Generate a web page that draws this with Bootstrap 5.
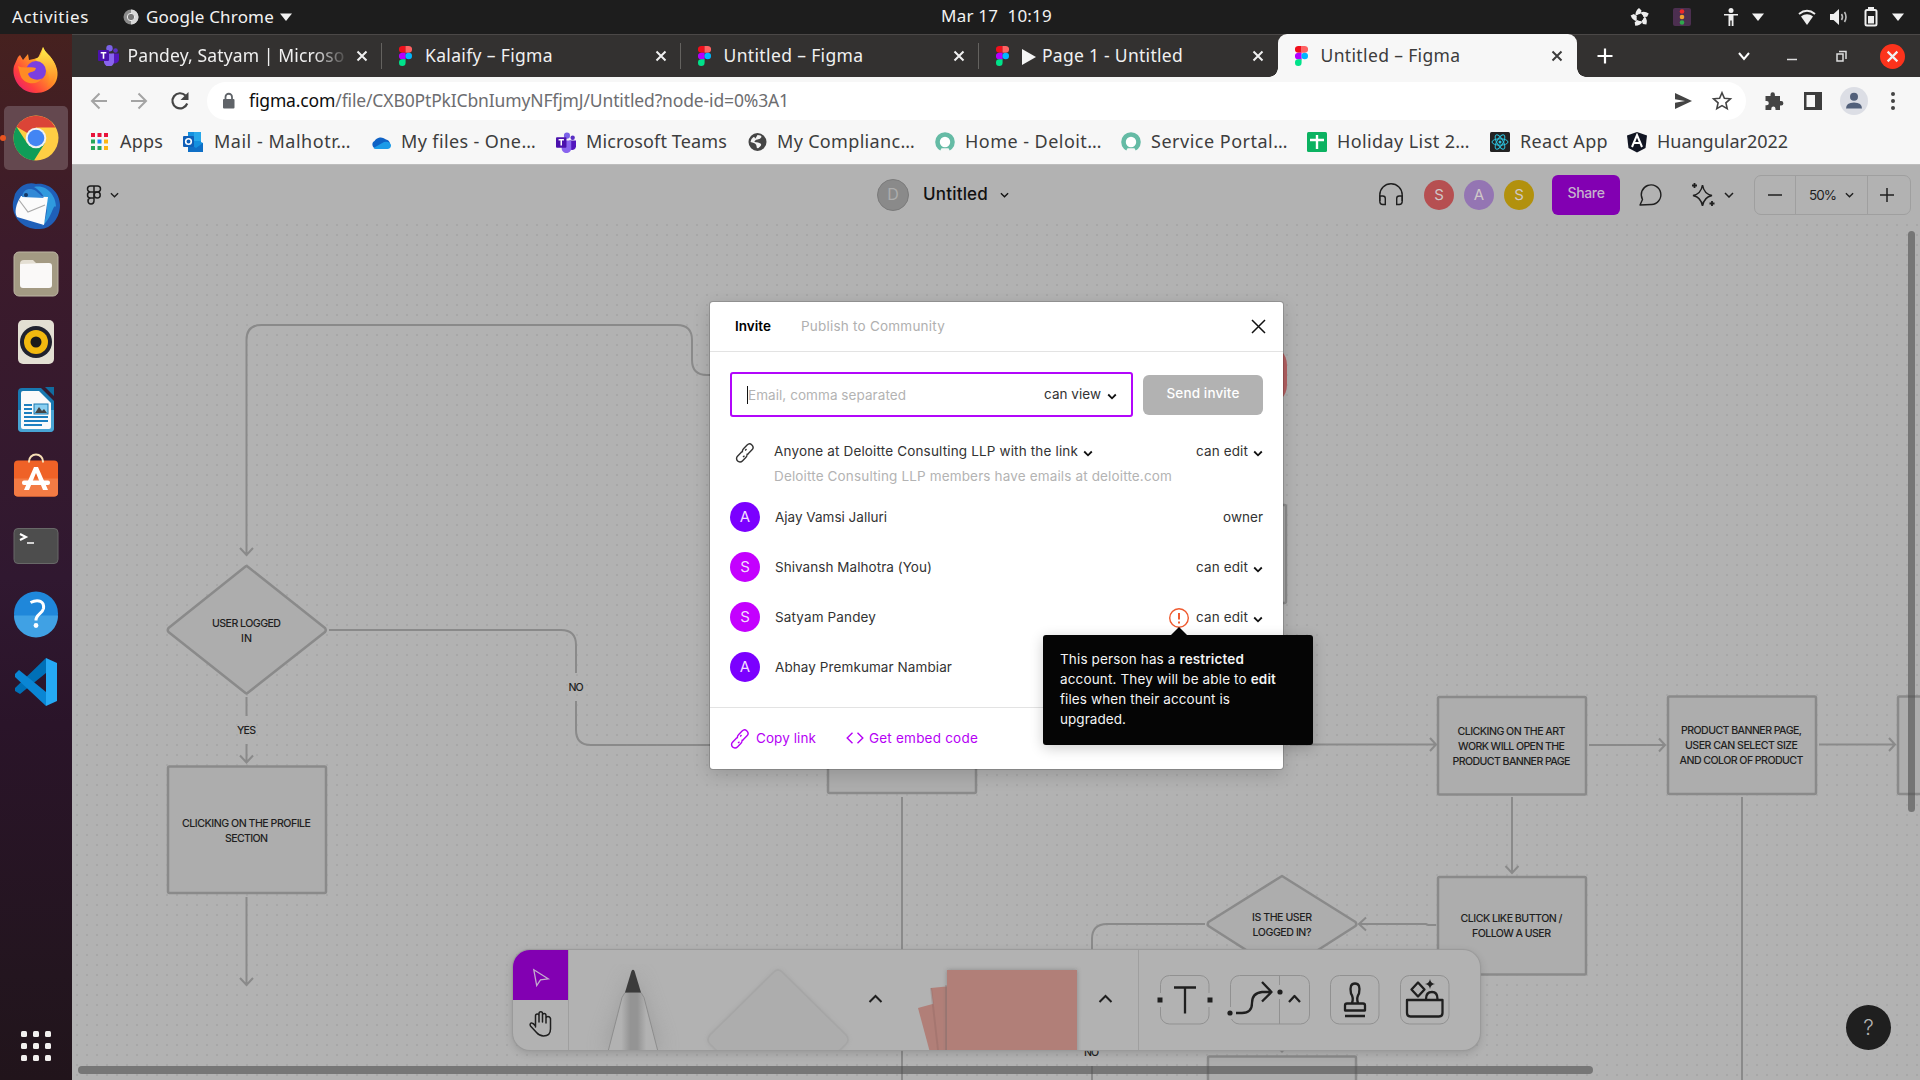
<!DOCTYPE html>
<html lang="en">
<head>
<meta charset="utf-8">
<meta name="viewport" content="width=device-width, initial-scale=1">
<title>Untitled – Figma</title>
<link href="https://cdn.jsdelivr.net/npm/bootstrap@5.3.0/dist/css/bootstrap.min.css" rel="stylesheet">
<style>
html,body{height:100%}
body{margin:0;overflow:hidden;font-family:"Noto Sans","Open Sans",sans-serif;font-size:17px;line-height:1.2;background:#1d1d1d}
svg{display:block;flex:none;overflow:visible}
span{white-space:nowrap}
.desk-bar{height:34px;background:#1d1d1d;color:#f2f2f2;position:relative;flex:none;padding:0 10px 0 12px}
.desk-clock{position:absolute;left:941px;top:6px;white-space:pre}
.s3{margin-left:3px}.s8{margin-left:8px}.s18{margin-left:18px}.s25{margin-left:25px}
.dock{width:72px;flex:none;background:linear-gradient(#46211f 0,#3c1b2b 20%,#301830 52%,#2a1429 66%,#23151f 90%,#21141b 100%);padding:4px 0 19px}
.dock-app{width:64px;height:64px;border-radius:5px;position:relative}
.dock-app.on{background:#64484f}
.dock-app.on::before{content:"";position:absolute;left:-4px;top:29px;width:6px;height:6px;border-radius:50%;background:#e95420}
.tabs{height:43px;background:#333130;border-top:1px solid #4b4847;color:#f0f0f0;padding-left:11.5px;flex:none;font-size:17.5px}
.tab{width:298.5px;height:42px;position:relative;padding-bottom:1px}
.tab .fav{width:26px;margin-left:17px;flex:none}
.tab .fav.wide{width:30px;margin-left:14px}
.tab .shut{margin-left:auto;margin-right:14px}
.tab.line::after{content:"";position:absolute;right:0;top:8px;height:26px;width:1px;background:#64625f}
.tab.on{background:#f7f7f7;color:#3c3c3c;border-radius:9px 9px 0 0;height:43px;margin-top:-1px;padding-bottom:0;width:299px}
.tab.on::before,.tab.on::after{content:"";position:absolute;bottom:0;width:9px;height:9px}
.tab.on::before{left:-9px;background:radial-gradient(circle at 0 0,transparent 8.5px,#f7f7f7 9px)}
.tab.on::after{right:-9px;background:radial-gradient(circle at 100% 0,transparent 8.5px,#f7f7f7 9px)}
.fade-end{-webkit-mask-image:linear-gradient(90deg,#000 185px,transparent 222px);mask-image:linear-gradient(90deg,#000 185px,transparent 222px)}
.chrome-close{width:25px;height:25px;border-radius:50%;background:#fc331c}
.tools{height:46px;background:#f7f7f7;flex:none;padding-left:17px;padding-top:1px;color:#3f3f3f}
.omni{width:1539px;height:38px;border-radius:19px;background:#fff;color:#6d6d70;padding-left:15px;padding-right:14px;margin-left:17px;font-size:17.5px}
.omni b{font-weight:400;color:#0c0c0c}
.marks{height:42px;background:#f7f7f7;border-bottom:1px solid #bdbdbd;flex:none;color:#3d3d3d;padding-left:18px;padding-bottom:3px;font-size:18px}
.bm{flex:none}
.bm svg{margin-right:10px}
.app{background:#b2b2b2;font-family:Inter,"Liberation Sans",sans-serif;color:#1f1f1f}
.app-head{height:57px;position:absolute;left:0;right:0;top:0;padding:10px 9px 7px 14px;background:#b2b2b2}
.who{width:30px;height:30px;border-radius:50%;color:#d0c8c8;font-size:15px;margin-right:10px}
.share{width:68px;height:40px;border-radius:6px;background:#8200b2;color:#c5b3cc;font-size:14px;font-weight:500;padding-bottom:4px;margin-left:8px}
.zoomer{width:157px;height:40px;border:1px solid #9f9f9f;border-radius:7px;font-size:13.5px}
.zoomer>div{height:38px}
.zoomer .mid{width:73px;border:solid #9f9f9f;border-width:0 1px}
.doc{position:absolute;left:805px;top:13px;font-size:17px;color:#111;font-weight:450}
.doc i{width:32px;height:32px;border-radius:50%;background:#8a8a8a;border:1px solid #7b7b7b;color:#adadad;font-size:16px;font-style:normal;font-weight:400;position:relative;top:1px}
.flow{position:absolute;left:0;top:0}
.flow text{font-size:10.6px;fill:#1f1f1f;font-weight:450;text-anchor:middle}
.kit{position:absolute;left:441px;top:785px;width:967px;height:100px;border-radius:17px;background:#b2b2b2;box-shadow:0 0 1px 1px #999,0 3px 10px rgba(0,0,0,.16);overflow:hidden}
.kit-l{width:56px;border-right:1px solid #9f9f9f;flex:none}
.kit-l div{height:50px}
.kit-l .pick{background:#8200b2;width:55px}
.modal-box{position:absolute;left:638px;top:137px;width:573px;height:467px;border-radius:3px;background:#fff;font-size:13.5px;color:#333;box-shadow:0 0 0 1px rgba(0,0,0,.15),0 5px 18px rgba(0,0,0,.16)}
.m-head{height:50px;border-bottom:1px solid #e3e3e3;padding:0 17px 1px 25px}
.mail{width:403px;height:45px;border:2px solid #b206fb;border-radius:3px;padding:0 14px 0 15px}
.mail em{font-style:normal;color:#b3b3b3;border-left:1px solid #111;line-height:18px}
.send{width:120px;height:40px;border-radius:6px;background:#b2b2b2;color:#fff;font-weight:500;padding-bottom:3px}
.m-row{height:50px;padding:0 20px}
.face{width:30px;height:30px;border-radius:50%;background:#c400ff;color:#f3dcff;font-size:15px;margin-right:15px}
.face.v{background:#7b00ff}
.m-foot{height:61px;border-top:1px solid #e3e3e3;color:#b500f5;padding:0 20px;margin-top:15px}
.tip{position:absolute;left:971px;top:470px;width:270px;height:110px;border-radius:3px;background:#050505;color:#f4f4f4;font-size:13.5px;line-height:20px;padding:14px 17px;box-shadow:0 3px 14px rgba(0,0,0,.2)}
.tip::before{content:"";position:absolute;left:128px;top:-8px;border:8px solid transparent;border-top:0;border-bottom-color:#050505}
.tip b{font-weight:600}
.bar-v{position:absolute;left:1836px;top:66px;width:7px;height:581px;border-radius:4px;background:rgba(80,80,80,.62)}
.bar-h{position:absolute;left:6px;top:901px;width:1515px;height:8px;border-radius:4px;background:rgba(80,80,80,.62)}
.ask{position:absolute;left:1774px;top:840px;width:45px;height:45px;border-radius:50%;background:#1f1f1f;color:#b2b2b2;font-size:21px;font-weight:300}
</style>
</head>
<body class="d-flex flex-column">
<svg width="0" height="0" class="position-absolute">
<defs>
<symbol id="fig" viewBox="0 0 13 20"><path d="M3.3 0h3.3v6.700H3.300a3.300 3.300 0 010-6.700z" fill="#f00f1b"/><path d="M6.500 0h3.200a3.300 3.300 0 010 6.700H6.500z" fill="#ff6262"/><path d="M3.300 6.700h3.300v6.700H3.300a3.300 3.300 0 010-6.700z" fill="#b300ff"/><circle cx="9.700" cy="10" r="3.300" fill="#00b6ff"/><path d="M3.300 13.300h3.300v3.400a3.300 3.300 0 11-3.300-3.400z" fill="#00e28a"/></symbol>
<symbol id="x" viewBox="0 0 12 12"><path d="M1.500 1.500l9 9m0-9l-9 9" stroke="currentColor" stroke-width="2" fill="none"/></symbol>
<symbol id="teams" viewBox="0 0 21 21"><circle cx="17.500" cy="5.500" r="2.300" fill="#5a2fc4"/><circle cx="11.500" cy="3.300" r="3.200" fill="#7b62e8"/><path d="M14 8.500h7v6a4 4 0 01-5 3.800z" fill="#5316bd"/><path d="M6 8.500h10v7a5 5 0 01-10 2z" fill="#8964ee"/><rect y="5" width="11" height="11" rx="1" fill="#4b11ad"/><path d="M2.700 7.700h5.600M5.500 7.700v6" stroke="#fff" stroke-width="1.600"/></symbol>
<symbol id="cv" viewBox="0 0 10 6"><path d="M1 1l4 4 4-4" fill="none" stroke="currentColor" stroke-width="1.500"/></symbol>
<symbol id="cvb" viewBox="0 0 10 7"><path d="M1.200 1.500L5 5.300l3.800-3.800" fill="none" stroke="#111" stroke-width="1.800"/></symbol>
<symbol id="tri" viewBox="0 0 24 24"><path d="M6 8.500h12L12 16z" fill="currentColor"/></symbol>
<symbol id="link" viewBox="0 0 20 20"><path d="M7.500 9.300q-.5-2 1-3.500l3.600-3.700a3.300 3.300 0 014.900 4.700l-3.600 3.800q-.8.700-1.700.9M12 10.700q.5 2-1 3.500l-3.600 3.700a3.300 3.300 0 01-4.900-4.700L6.100 9.400q.8-.7 1.700-.9M11.500 6l-1.300 1.400M9.500 12.700L8 14" fill="none" stroke="currentColor" stroke-width="1.400"/></symbol>
<symbol id="del" viewBox="0 0 20 20"><circle cx="10" cy="10" r="7.500" fill="#fff" stroke="#65bba5" stroke-width="4.600"/><path d="M6.500 16.300h7L16 21H4z" fill="#f7f7f7"/></symbol>
</defs></svg>

<header class="desk-bar d-flex align-items-center">
<span class="fit" data-w="77">Activities</span>
<svg width="16" height="16" viewBox="0 0 16 16" style="margin:0 7px 0 34px"><circle cx="8" cy="8" r="7.500" fill="#8b8b8b"/><path d="M8 .5a7.500 7.500 0 010 15z" fill="#d8d8d8"/><circle cx="8" cy="8" r="3.700" fill="#777" stroke="#eee"/></svg>
<span class="fit" data-w="128">Google Chrome</span>
<svg width="24" height="24"><use href="#tri"/></svg>
<span class="desk-clock fit" data-w="111">Mar 17  10:19</span>
<div class="d-flex align-items-center ms-auto">
<svg width="24" height="24" viewBox="0 0 24 24"><g fill="#eee"><path id="bl0" d="M11 3l2.500 2.500-1 3.500-5 1.500Q7 6 11 3z"/><use href="#bl0" transform="rotate(72 12 12.500)"/><use href="#bl0" transform="rotate(144 12 12.500)"/><use href="#bl0" transform="rotate(216 12 12.500)"/><use href="#bl0" transform="rotate(288 12 12.500)"/></g><circle cx="12" cy="12.500" r="3.200" fill="#1d1d1d"/></svg>
<svg class="s18" width="24" height="24" viewBox="0 0 24 24"><rect x="3" y="3" width="18" height="18" rx="2" fill="#4c2f50"/><circle cx="12" cy="6.500" r="2.300" fill="#ef2929"/><circle cx="12" cy="12" r="2.300" fill="#f0a030"/><circle cx="12" cy="17.500" r="2.300" fill="#2fa84c"/></svg>
<svg class="s25" width="24" height="24" viewBox="0 0 24 24" fill="#eee"><circle cx="12" cy="5.500" r="2.500"/><path d="M5 9h14v1.600h-4.500V21h-1.800v-5.500h-1.400V21H9.500V10.600H5z"/></svg>
<svg class="s3" width="24" height="24"><use href="#tri"/></svg>
<svg class="s25" width="24" height="24" viewBox="0 0 24 24" fill="none" stroke="#eee" stroke-width="2"><path d="M4 9c5-4 11-4 16 0"/><path d="M6 11.500c4-3 8-3 12 0L12 20z" fill="#eee" stroke="none"/></svg>
<svg class="s8" width="24" height="24" viewBox="0 0 24 24"><path d="M3 9h3.500L12 4v16l-5.500-5H3z" fill="#eee"/><path d="M14.500 9q2 3 0 6M17.500 7q3 5 0 10" fill="none" stroke="#bbb" stroke-width="1.600"/></svg>
<svg class="s8" width="24" height="24" viewBox="0 0 24 24" fill="#eee"><rect x="6.500" y="5" width="11" height="15.500" rx="1.500" fill="none" stroke="#eee" stroke-width="2"/><rect x="9" y="2" width="6" height="3"/><rect x="9" y="11" width="6" height="7.500"/></svg>
<svg class="s3" width="24" height="24"><use href="#tri"/></svg>
</div>
</header>

<div class="d-flex flex-grow-1">
<nav class="dock d-flex flex-column align-items-center gap-1">
<div class="dock-app d-flex align-items-center justify-content-center"><svg width="46" height="46" viewBox="0 0 46 46"><defs><linearGradient id="ff" x1="1" y1="0" x2="0" y2="1"><stop offset="0" stop-color="#ffe84a"/><stop offset=".4" stop-color="#ff9a25"/><stop offset=".72" stop-color="#ff3f3d"/><stop offset="1" stop-color="#e01085"/></linearGradient><linearGradient id="fy" x1="0" y1="0" x2="0" y2="1"><stop offset="0" stop-color="#fff14b"/><stop offset="1" stop-color="#ff7b22"/></linearGradient></defs><path d="M5 10l2-2 3 5 5-6 1 6 9-2 5-11c2 6 8 8 12 17 8 16-4 29-19 29C7 46-2 31 1 19z" fill="url(#ff)"/><path d="M30 0c2 6 8 8 12 17 4 10-1 20-8 23 4-8 2-17-4-20l-8-8c5-2 7-5 8-12z" fill="url(#fy)"/><circle cx="23" cy="24" r="10" fill="#7b3fe0"/><path d="M5 19c6 3 13 0 18 2-1 5-6 3-8 6 2 6 11 7 14 4-5 9-20 6-22-4z" fill="#ff8b24"/></svg></div>
<div class="dock-app on d-flex align-items-center justify-content-center"><svg width="46" height="46" viewBox="0 0 46 46"><circle cx="23" cy="23" r="22.500" fill="#ffce44"/><path d="M23 23L3.500 11.800A22.500 22.500 0 0142.500 12.500H23z" fill="#db4437"/><path d="M3.500 11.800A22.500 22.500 0 0021 45.400L32 28 23 33 14 28z" fill="#0f9d58"/><circle cx="23" cy="23" r="10.300" fill="#f1f1f1"/><circle cx="23" cy="23" r="8.300" fill="#4285f4"/></svg></div>
<div class="dock-app d-flex align-items-center justify-content-center"><svg width="48" height="48" viewBox="0 0 48 48"><path d="M3 12C9 1 19 0 24 2c12-2 24 8 24 21 0 12-8 24-20 24C12 48-1 36 1 20z" fill="#1f5fb8"/><path d="M22 5c13-3 22 9 22 20-3-4-4 12-14 19 8-14 7-30-8-39z" fill="#2f9ade"/><path d="M9 14l27 1-4 28L5 35C2 30 4 22 9 14z" fill="#fbfbfb"/><path d="M7 18l9 12 17-7" fill="none" stroke="#aaa" stroke-width="1.200"/><path d="M10 15C11 7 18 5 24 9l8 7z" fill="#3289d6"/><circle cx="14" cy="13" r="2" fill="#153764"/></svg></div>
<div class="dock-app d-flex align-items-center justify-content-center"><svg width="46" height="46" viewBox="0 0 46 46"><rect x="1" y="1" width="44" height="44" rx="5" fill="#a39a83" stroke="#bdb6a4"/><path d="M7 13q0-4 4-4h9l3 3h13v10H7z" fill="#e4dfd3"/><path d="M7 14q0-1 1-1l28-1q3 0 3 3v19q0 3-3 3H10q-3 0-3-3z" fill="#faf9f8"/></svg></div>
<div class="dock-app d-flex align-items-center justify-content-center"><svg width="46" height="46" viewBox="0 0 46 46"><rect x="5" y="1" width="36" height="44" rx="5" fill="#e3dfd3"/><circle cx="23" cy="23" r="16" fill="#20222e"/><circle cx="23" cy="23" r="12" fill="#f2b90f"/><circle cx="23" cy="23" r="5.500" fill="#1a1a1a"/></svg></div>
<div class="dock-app d-flex align-items-center justify-content-center"><svg width="46" height="46" viewBox="0 0 46 46"><path d="M9 1h19l13 13v27q0 4-4 4H9q-4 0-4-4V5q0-4 4-4z" fill="#1878b0"/><path d="M5 23h36v18q0 4-4 4H9q-4 0-4-4z" fill="#48a4d4"/><path d="M32 0h9v9z" fill="#116c9f"/><path d="M10 4h16l12 12v24q0 2-2 2H10q-2 0-2-2V6q0-2 2-2z" fill="#fafafa"/><path d="M11 18h8m-8 4h8m-8 4h8m-8 4h24m-24 4h24m-24 4h18" stroke="#1c7fc0" stroke-width="2"/><rect x="21" y="17" width="14" height="10" fill="#8ad0f2" stroke="#1878b0"/><path d="M22 26l4-6 3 4 2-2 3 4z" fill="#444"/></svg></div>
<div class="dock-app d-flex align-items-center justify-content-center"><svg width="46" height="46" viewBox="0 2.500 46 46"><rect x="1" y="8" width="44" height="36" rx="4" fill="#ef6227"/><path d="M1 26h44v14q0 4-4 4H5q-4 0-4-4z" fill="#f37b44"/><path d="M16 10V9a7 7 0 0114 0v1" fill="none" stroke="#f6deb5" stroke-width="2"/><path d="M21 14.500h4l10 23h-5l-7-17-7 17h-5z" fill="#fff"/><rect x="9" y="28" width="28" height="4.500" rx="2" fill="#fff"/></svg></div>
<div class="dock-app d-flex align-items-center justify-content-center"><svg width="46" height="46" viewBox="0 0 46 46"><rect x="1" y="5.500" width="44" height="35" rx="4" fill="#4d4d4d" stroke="#686868"/><path d="M7 11l6 3-6 3" fill="none" stroke="#fff" stroke-width="2"/><path d="M14 20h7" stroke="#fff" stroke-width="1.500"/></svg></div>
<div class="dock-app d-flex align-items-center justify-content-center"><svg width="46" height="46" viewBox="0 .5 46 46"><circle cx="23" cy="23" r="22" fill="#1f87da"/><path d="M1 25a22 22 0 0044 0z" fill="#40a1e4"/><path d="M17.500 12c8-4 14-1 13 6-1 5-8 6-7.500 12" fill="none" stroke="#fff" stroke-width="3"/><circle cx="23" cy="35" r="2.400" fill="#fff"/></svg></div>
<div class="dock-app d-flex align-items-center justify-content-center"><svg width="44" height="50" viewBox="0 0 44 50"><path d="M1 31l31-30v15L6 37 1 34z" fill="#0070b7"/><path d="M1 17l4-4 27 22v14L1 20z" fill="#0a86d4"/><path d="M32 1l11 5v38l-11 5z" fill="#25a9f4"/></svg></div>
<svg class="mt-auto" width="30" height="30" viewBox="0 0 30 30" fill="#f2f0ef"><rect width="6" height="6" rx="1.500"/><rect x="12" width="6" height="6" rx="1.500"/><rect x="24" width="6" height="6" rx="1.500"/><rect y="12" width="6" height="6" rx="1.500"/><rect x="12" y="12" width="6" height="6" rx="1.500"/><rect x="24" y="12" width="6" height="6" rx="1.500"/><rect y="24" width="6" height="6" rx="1.500"/><rect x="12" y="24" width="6" height="6" rx="1.500"/><rect x="24" y="24" width="6" height="6" rx="1.500"/></svg>
</nav>

<main class="d-flex flex-column flex-grow-1" style="min-width:0">
<div class="tabs d-flex">
<div class="tab line d-flex align-items-center"><div class="fav wide"><svg width="21" height="21"><use href="#teams"/></svg></div><div class="fade-end"><span class="fit" data-w="217">Pandey, Satyam | Microso</span></div><svg class="shut" width="12" height="12"><use href="#x"/></svg></div>
<div class="tab line d-flex align-items-center"><div class="fav"><svg width="13" height="20"><use href="#fig"/></svg></div><span class="fit" data-w="128">Kalaify – Figma</span><svg class="shut" width="12" height="12"><use href="#x"/></svg></div>
<div class="tab line d-flex align-items-center"><div class="fav"><svg width="13" height="20"><use href="#fig"/></svg></div><span class="fit" data-w="140">Untitled – Figma</span><svg class="shut" width="12" height="12"><use href="#x"/></svg></div>
<div class="tab d-flex align-items-center"><div class="fav"><svg width="13" height="20"><use href="#fig"/></svg></div><svg width="15" height="18" viewBox="0 0 15 18"><path d="M0 2l14 8-14 8z" fill="#f4f4f4"/></svg><span class="fit" data-w="141" style="margin-left:5px">Page 1 - Untitled</span><svg class="shut" width="12" height="12"><use href="#x"/></svg></div>
<div class="tab on d-flex align-items-center"><div class="fav"><svg width="13" height="20"><use href="#fig"/></svg></div><span class="fit" data-w="140">Untitled – Figma</span><svg class="shut" width="12" height="12"><use href="#x"/></svg></div>
<div class="d-flex align-items-center flex-grow-1" style="padding:0 15px 0 20px">
<svg width="16" height="16" viewBox="0 0 16 16"><path d="M8 .5v15M.5 8h15" stroke="#fff" stroke-width="2.200"/></svg>
<svg class="ms-auto" width="12" height="12" viewBox="0 0 12 12"><path d="M1 3l5 6 5-6" fill="none" stroke="#fff" stroke-width="2"/></svg>
<svg width="10" height="10" viewBox="0 0 10 10" style="margin-left:37px"><path d="M0 8.500h10" stroke="#ddd" stroke-width="1.500"/></svg>
<svg width="11" height="12" viewBox="0 0 11 12" style="margin-left:39px"><path d="M1 4h6v7H1zM3 1.500h7V9" fill="none" stroke="#ddd" stroke-width="1.500"/></svg>
<div class="chrome-close d-flex align-items-center justify-content-center" style="margin-left:33px"><svg width="13" height="13"><use href="#x"/></svg></div>
</div>
</div>

<div class="tools d-flex align-items-center">
<svg width="20" height="20" viewBox="0 0 20 20" fill="none" stroke="#a4a4a4" stroke-width="2"><path d="M18 10H3m7.500-7.500L3 10l7.500 7.500"/></svg>
<svg width="20" height="20" viewBox="0 0 20 20" fill="none" stroke="#a4a4a4" stroke-width="2" style="margin-left:20px"><path d="M2 10h15M9.500 2.500L17 10l-7.500 7.500"/></svg>
<svg width="20" height="20" viewBox="0 0 20 20" style="margin-left:21px"><path d="M15.500 4.500a7.600 7.600 0 101.700 8" fill="none" stroke="#444" stroke-width="2.200"/><path d="M18.500 1v8h-8z" fill="#444"/></svg>
<div class="omni d-flex align-items-center">
<svg width="14" height="16" viewBox="0 0 14 16"><rect x="1" y="6" width="11.500" height="9.500" rx="1" fill="#5f6368"/><path d="M3.500 7V4a3.200 3.200 0 016.500 0v3" fill="none" stroke="#5f6368" stroke-width="1.800"/></svg>
<span class="fit" data-w="540" style="margin-left:13px"><b>figma.com</b>/file/CXB0PtPkICbnIumyNFfjmJ/Untitled?node-id=0%3A1</span>
<svg class="ms-auto" width="18" height="16" viewBox="0 0 18 16"><path d="M1 0l17 8-17 8V9.700L11 8 1 6.300z" fill="#444"/></svg>
<svg width="20" height="20" viewBox="0 0 20 20" style="margin-left:20px"><path d="M10 1.800l2.400 5.500 6 .5-4.500 4 1.300 5.900-5.200-3.100-5.200 3.100 1.300-5.900-4.500-4 6-.5z" fill="none" stroke="#444" stroke-width="1.600"/></svg>
</div>
<svg width="20" height="20" viewBox="0 0 20 20" style="margin-left:18px"><path d="M1.500 5h5V3.500a2.200 2.200 0 014.400 0V5H16v5h1.200a2.200 2.200 0 010 4.400H16V19h-4.500v-1.300a2.100 2.100 0 00-4.200 0V19H1.500v-4.700h1.200a2.100 2.100 0 000-4.200H1.500z" fill="#444"/></svg>
<svg width="18" height="18" viewBox="0 0 18 18" style="margin-left:20px"><path d="M0 0h18v18H0zM2.500 3v12H11V3z" fill="#3d3d3d" fill-rule="evenodd"/></svg>
<svg width="28" height="28" viewBox="0 0 28 28" style="margin-left:18px"><circle cx="14" cy="14" r="14" fill="#dcdee5"/><circle cx="14" cy="9.800" r="4" fill="#52607a"/><path d="M6 21.500q0-6 8-6t8 6z" fill="#52607a"/></svg>
<svg width="4" height="18" viewBox="0 0 4 18" style="margin-left:23px" fill="#444"><circle cx="2" cy="2" r="2"/><circle cx="2" cy="9" r="2"/><circle cx="2" cy="16" r="2"/></svg>
</div>

<div class="marks d-flex align-items-center">
<div class="bm d-flex align-items-center" style="width:92px"><svg width="20" height="18" viewBox="-1 0 20 18"><path d="M0 0h4v4H0zM6.500 0h4v4h-4zM13 0h4v4h-4z" fill="#e8143c"/><path d="M0 6.500h4v4H0zM0 13h4v4H0zM6.500 13h4v4h-4z" fill="#27a65b"/><path d="M6.500 6.500h4v4h-4z" fill="#1e88ff"/><path d="M13 6.500h4v4h-4zM13 13h4v4h-4z" fill="#fdb515"/></svg><span class="fit" data-w="43">Apps</span></div>
<div class="bm d-flex align-items-center" style="width:189px"><svg width="22" height="20" viewBox="-1 0 22 20"><path d="M5 0h13v10l2 1v8H5z" fill="#1490df"/><path d="M11 0h7v9h-7z" fill="#28a8ea"/><path d="M5 11l8 5 7-5v9H5z" fill="#0f6fc6"/><rect y="4" width="11" height="11" rx="1" fill="#0f5fb8"/><circle cx="5.500" cy="9.500" r="2.800" fill="none" stroke="#fff" stroke-width="1.600"/></svg><span class="fit" data-w="137">Mail - Malhotr…</span></div>
<div class="bm d-flex align-items-center" style="width:185px"><svg width="20" height="14" viewBox="0 0 20 14"><path d="M3.500 6A7 6 0 0115 4.500a5 5 0 012 9H5A4 4 0 013.500 6z" fill="#0f62c5"/><path d="M5 14a4 4 0 01-2.500-1L13 7a5 4 0 017 4q-.5 3-4 3z" fill="#1c9be8"/></svg><span class="fit" data-w="135">My files - One…</span></div>
<div class="bm d-flex align-items-center" style="width:192px"><svg width="20" height="21"><use href="#teams"/></svg><span class="fit" data-w="141">Microsoft Teams</span></div>
<div class="bm d-flex align-items-center" style="width:187px"><svg width="19" height="18" viewBox="0 0 18 18"><circle cx="9" cy="9" r="9" fill="#454545"/><path d="M9 2q4 0 4 2-1 2-4 2.500T6 9q4 0 6 1.500T10 15q-2 1-2-2t-6-4q0-3 3-5 2 0 1.500 1.500T9 2z" fill="#f4f4f4"/></svg><span class="fit" data-w="138">My Complianc…</span></div>
<div class="bm d-flex align-items-center" style="width:186px"><svg width="20" height="20"><use href="#del"/></svg><span class="fit" data-w="137">Home - Deloit…</span></div>
<div class="bm d-flex align-items-center" style="width:186px"><svg width="20" height="20"><use href="#del"/></svg><span class="fit" data-w="137">Service Portal…</span></div>
<div class="bm d-flex align-items-center" style="width:183px"><svg width="20" height="20" viewBox="0 0 20 20"><rect width="20" height="20" rx="1.500" fill="#0bb261"/><path d="M10 3v14M3 8h14" stroke="#fff" stroke-width="2.400"/></svg><span class="fit" data-w="133">Holiday List 2…</span></div>
<div class="bm d-flex align-items-center" style="width:137px"><svg width="20" height="20" viewBox="0 0 20 20"><rect width="20" height="20" rx="1.500" fill="#222"/><g fill="none" stroke="#2cc5e0"><ellipse cx="10" cy="10" rx="8" ry="3.200"/><ellipse cx="10" cy="10" rx="8" ry="3.200" transform="rotate(60 10 10)"/><ellipse cx="10" cy="10" rx="8" ry="3.200" transform="rotate(120 10 10)"/></g><circle cx="10" cy="10" r="1.500" fill="#2cc5e0"/></svg><span class="fit" data-w="88">React App</span></div>
<div class="bm d-flex align-items-center"><svg width="20" height="20" viewBox="0 0 20 20"><path d="M10 0l10 3.500L18.500 16 10 20.500 1.500 16 0 3.500z" fill="#111522"/><path d="M5 15l5-12 5 12m-8-4h6" fill="none" stroke="#fff" stroke-width="2"/></svg><span class="fit" data-w="131">Huangular2022</span></div>
</div>

<section class="app flex-grow-1 position-relative overflow-hidden">
<svg class="flow" width="1848" height="915" viewBox="72 165 1848 915">
<defs><pattern id="dots" x="76" y="224" width="10" height="10" patternUnits="userSpaceOnUse"><rect width="2" height="2" fill="#a7a7a7"/></pattern></defs>
<rect x="72" y="222" width="1848" height="858" fill="url(#dots)"/>
<g fill="none" stroke="#8a8a8a" stroke-width="2">
<path d="M246.500 555V340q0-15 15-15H677q15 0 15 15v20q0 15 15 15h10M240 548l6.500 7 6.500-7"/>
<path d="M329 630H561q15 0 15 15v28M576 701v29q0 15 15 15h125M1290 744.500h146M1430 738l6 6.500-6 6.500"/>
<path d="M246.500 697v19M246.500 744v18M240 755.500l6.500 7 6.500-7M246.500 897v87M240 978l6.500 7 6.500-7"/>
<path d="M1589 745h76M1659 738.500l6 6.500-6 6.500M1819 744.500h76M1889 738l6 6.500-6 6.500"/>
<path d="M1512 797v76M1505.500 866l6.500 7 6.500-7M1742 797v283M902 797v283"/>
<path d="M1436 925h-8l-2-1h-66M1366 917.500l-7 6.500 7 6.500M1205 924h-98q-15 0-15 15v100M1092 1066v14M1282 1040v11"/>
</g>
<path d="M1277 1048h10l-5 5z" fill="#8a8a8a"/>
<g fill="#adadad" stroke="#8a8a8a" stroke-width="2.500" stroke-linejoin="round">
<path d="M245.500 566.500q1-.8 2 0L325 628q1.500 2 0 4L247.500 693q-1 .8-2 0L168.500 632q-1.500-2 0-4z"/>
<rect x="168" y="766.500" width="158" height="126.500" rx="1.500"/>
<rect x="828" y="696" width="148" height="97" rx="1.500"/>
<rect x="1180" y="505" width="106" height="98" rx="1.500"/>
<rect x="1438" y="697" width="148" height="97.500" rx="1.500"/>
<rect x="1668" y="696.500" width="148" height="97.500" rx="1.500"/>
<rect x="1898" y="696.500" width="148" height="97.500" rx="1.500"/>
<rect x="1438" y="877" width="148" height="97.500" rx="1.500"/>
<rect x="1208" y="1056.500" width="148" height="60" rx="1.500"/>
<path d="M1282 876L1355.500 922q1.500 2 0 4L1282 973 1208.500 926q-1.500-2 0-4z"/>
</g>
<rect x="1180" y="345" width="107" height="60" rx="20" fill="#b35f61"/>
<text x="246.500" y="626.500" textLength="69">USER LOGGED</text><text x="246.500" y="641.500">IN</text>
<text x="246.500" y="734" textLength="19">YES</text><text x="576" y="691" textLength="15">NO</text>
<text x="246.500" y="826.500" textLength="129">CLICKING ON THE PROFILE</text><text x="246.500" y="841.500" textLength="43">SECTION</text>
<text x="1511.500" y="734.500" textLength="108">CLICKING ON THE ART</text><text x="1511.500" y="749.500" textLength="107">WORK WILL OPEN THE</text><text x="1511.500" y="764.500" textLength="118">PRODUCT BANNER PAGE</text>
<text x="1741.500" y="734" textLength="121">PRODUCT BANNER PAGE,</text><text x="1741.500" y="749" textLength="113">USER CAN SELECT SIZE</text><text x="1741.500" y="764" textLength="124">AND COLOR OF PRODUCT</text>
<text x="1511.500" y="922" textLength="102">CLICK LIKE BUTTON /</text><text x="1511.500" y="937" textLength="79">FOLLOW A USER</text>
<text x="1282" y="921" textLength="60">IS THE USER</text><text x="1282" y="936" textLength="59">LOGGED IN?</text>
<text x="1091.500" y="1056" textLength="15">NO</text>
</svg>

<div class="app-head d-flex align-items-center">
<svg width="16" height="20" viewBox="0 0 16 20" fill="none" stroke="#1f1f1f" stroke-width="1.500"><path d="M8 1H4.500a3 3 0 000 6H8zM8 1h3.500a3 3 0 010 6H8zM8 7H4.500a3 3 0 000 6H8zM8 13H4.500a3 3 0 103.500 3z"/><circle cx="11.200" cy="10" r="3"/></svg>
<svg width="9" height="6" style="margin-left:8px"><use href="#cv"/></svg>
<div class="doc d-flex align-items-center"><i class="d-flex align-items-center justify-content-center">D</i><span class="fit" data-w="65" style="margin-left:14px">Untitled</span><svg width="9" height="6" style="margin:2px 0 0 12px"><use href="#cv"/></svg></div>
<svg class="ms-auto" width="24" height="24" viewBox="0 0 24 24" fill="none" stroke="#1f1f1f" stroke-width="1.400"><path d="M.8 18V12a11.200 11.200 0 0122.400 0v6"/><path d="M.8 13h3q2.500 0 2.500 2.500v6h-2.500q-3 0-3-3zM23.200 13h-3q-2.500 0-2.500 2.500v6h2.500q3 0 3-3z"/></svg>
<div class="who d-flex align-items-center justify-content-center" style="background:#b64f51;margin-left:21px">S</div>
<div class="who d-flex align-items-center justify-content-center" style="background:#9475b3">A</div>
<div class="who d-flex align-items-center justify-content-center" style="background:#b2910d">S</div>
<div class="share d-flex align-items-center justify-content-center"><span class="fit" data-w="37">Share</span></div>
<svg width="23" height="22" viewBox="0 0 23 22" style="margin-left:19px"><path d="M1 21l2.500-5.500A9.800 9.800 0 1112.500 20.500z" fill="none" stroke="#1f1f1f" stroke-width="1.400" stroke-linejoin="round"/></svg>
<svg width="24" height="24" viewBox="0 0 24 24" style="margin-left:29px" fill="none" stroke="#1f1f1f"><path d="M11.500 2q1.500 9 9.500 10.500-8 1.500-9.500 10.500Q10 14 2 12.500 10 11 11.500 2z" stroke-width="1.500"/><path d="M3.500 0v5M1 2.500h5M21 18v5M18.500 20.500h5" stroke-width="1.800"/></svg>
<svg width="10" height="6" style="margin-left:9px;margin-right:20px"><use href="#cv"/></svg>
<div class="zoomer d-flex align-items-center"><div class="d-flex align-items-center justify-content-center" style="width:40px"><svg width="14" height="2" viewBox="0 0 14 2"><path d="M0 1h14" stroke="#1f1f1f" stroke-width="1.500"/></svg></div><div class="mid d-flex align-items-center justify-content-center"><span class="fit" data-w="27">50%</span><svg width="9" height="6" style="margin-left:9px"><use href="#cv"/></svg></div><div class="d-flex flex-grow-1 align-items-center justify-content-center pe-1"><svg width="14" height="14" viewBox="0 0 14 14"><path d="M0 7h14M7 0v14" stroke="#1f1f1f" stroke-width="1.500"/></svg></div></div>
</div>

<div class="kit d-flex">
<div class="kit-l">
<div class="pick d-flex align-items-center justify-content-center"><svg width="16" height="18" viewBox="0 0 16 18" style="margin-top:5px"><path d="M.8.8l14.400 9-7.700 1L3.700 16.500z" fill="none" stroke="#c3acce" stroke-width="1.300"/></svg></div>
<div class="d-flex align-items-center justify-content-center"><svg width="23" height="26" viewBox="0 0 23 26" style="margin:0 1px 3px 0" fill="none" stroke="#1f1f1f" stroke-width="1.500" stroke-linejoin="round" stroke-linecap="round"><path d="M6.500 16V5q0-2 1.800-2t1.800 2M10 11V2.800q0-2 1.800-2t1.700 2V11M13.500 4q0-1.500 1.700-1.500T17 4.500V12M17 7q.3-1.500 2-1.500T21.500 7.500V18q0 7-7 7-4 0-7-3.500L1.500 15q-1-2 .5-3 2-.500 4.500 3"/></svg></div>
</div>
<svg width="570" height="100" viewBox="569 950 570 100">
<defs><linearGradient id="pen" x1="0" x2="1"><stop offset=".28" stop-color="#b2b2b2"/><stop offset=".45" stop-color="#949494"/><stop offset=".58" stop-color="#949494"/><stop offset=".75" stop-color="#b2b2b2"/></linearGradient><filter id="bl"><feGaussianBlur stdDeviation="2"/></filter><filter id="bl2" x="-100%" width="300%"><feGaussianBlur stdDeviation="10"/></filter></defs>
<path d="M633 972l-28 78h56z" fill="#888" opacity=".5" filter="url(#bl2)"/>
<path d="M625 992.500h16l3 5 15.500 60h-53l15.500-60z" fill="url(#pen)" stroke="#8d8d8d"/><path d="M631.500 971q1.500-2.500 3 0l6.500 21.500h-16z" fill="#3b3b3b"/>
<path d="M774 972q4-4 8 0l64 63q4 5 0 9l-64 63h-8l-64-63q-4-4 0-9z" fill="#8e8e8e" filter="url(#bl)" opacity=".5"/><path d="M774 972q4-4 8 0l64 63q4 5 0 9l-64 63h-8l-64-63q-4-4 0-9z" fill="#adadad" stroke="#a6a6a6" stroke-width="1.500"/>
<g fill="none" stroke="#1f1f1f" stroke-width="2"><path d="M869.500 1002l6-6 6 6M1099.500 1002l6-6 6 6"/></g>
<path d="M918 1008l20-5.500 12 50h-20z" fill="#b17f78"/><path d="M931 988l20-2 6 64h-17.500z" fill="#b17f78"/><path d="M931 988l7 62M946 985v65" stroke="#8c6460" opacity=".3" stroke-width="2"/><rect x="947" y="970" width="130" height="90" fill="#777" filter="url(#bl)" opacity=".7"/><rect x="947" y="970" width="130" height="80" fill="#b17f78"/>
<path d="M1138.500 950v100" stroke="#9f9f9f"/>
</svg>
<svg width="341" height="100" viewBox="1139 950 341 100">
<g fill="none" stroke="#919191"><rect x="1160.500" y="975.500" width="48.500" height="48.500" rx="9"/><rect x="1230.500" y="975.500" width="79" height="48.500" rx="9"/><path d="M1279.500 976v48"/><rect x="1330.500" y="975.500" width="48.500" height="48.500" rx="9"/><rect x="1400.500" y="975.500" width="48.500" height="48.500" rx="9"/></g>
<path d="M1156 993h10v14h-10zM1204 993h10v14h-10zM1274 985h11v14h-11zM1225 1007h12v12h-12z" fill="#b2b2b2"/>
<g fill="#1f1f1f"><path d="M1157.500 997.500h5v5h-5zM1207.500 997.500h5v5h-5z"/><circle cx="1280" cy="992" r="2.600"/><circle cx="1230" cy="1013" r="2.600"/></g>
<g fill="none" stroke="#1f1f1f" stroke-width="2.300" stroke-linejoin="round"><path d="M1174 987.500h22M1185 987.500v26M1236 1013h6q10 0 10-10t10-11h9M1262 982l9.500 10-9.500 9.500"/><path d="M1289 1002l5.500-6 5.500 6"/>
<path d="M1352 1003q2-5-1-9.500-2-10 4-10t4 10q-3 4.500-1 9.500M1347 1003.500q-2 0-2 2v5h20v-5q0-2-2-2zM1345 1016h20"/>
<path d="M1407 1000h35.500v13q0 3.500-3.500 3.500h-28.500q-3.500 0-3.500-3.500zM1418 982.500l6.500 7-6.500 7-6.500-7zM1426 999q0-7 6-7 5.500 0 5.500 7"/></g>
<path d="M1430 979q.7 4.300 5 5-4.300.7-5 5-.7-4.300-5-5 4.300-.7 5-5z" fill="#1f1f1f"/>
</svg>
</div>

<div class="bar-v"></div><div class="bar-h"></div>
<div class="ask d-flex align-items-center justify-content-center">?</div>

<div class="modal-box" role="dialog">
<div class="m-head d-flex align-items-center"><span class="fit text-black" data-w="36" style="font-weight:600">Invite</span><span class="fit" data-w="144" style="margin-left:30px;color:#b0b0b0">Publish to Community</span><svg class="ms-auto" width="15" height="15" viewBox="0 0 15 15"><path d="M1 1l13 13M14 1L1 14" stroke="#111" stroke-width="1.500"/></svg></div>
<div class="d-flex align-items-center" style="padding:20px 20px 0;gap:10px">
<div class="mail d-flex align-items-center"><em><span class="fit" data-w="158">Email, comma separated</span></em><span class="fit ms-auto" data-w="57">can view</span><svg width="10" height="7" style="margin:3px 0 0 6px"><use href="#cvb"/></svg></div>
<div class="send d-flex align-items-center justify-content-center"><span class="fit" data-w="73">Send invite</span></div>
</div>
<div class="d-flex" style="padding:26px 20px 0;height:75px">
<svg width="20" height="20" style="margin:0 19px 0 5px"><use href="#link"/></svg>
<div><div class="d-flex align-items-center"><span class="fit" data-w="304">Anyone at Deloitte Consulting LLP with the link</span><svg width="10" height="7" style="margin:4px 0 0 5px"><use href="#cvb"/></svg></div><div style="margin-top:9px;color:#b3b3b3"><span class="fit" data-w="398">Deloitte Consulting LLP members have emails at deloitte.com</span></div></div>
<div class="ms-auto d-flex" style="height:17px"><span class="fit" data-w="52">can edit</span><svg width="10" height="7" style="margin:7px 0 0 5px"><use href="#cvb"/></svg></div>
</div>
<div class="m-row d-flex align-items-center"><div class="face v d-flex align-items-center justify-content-center">A</div><span class="fit" data-w="112">Ajay Vamsi Jalluri</span><span class="fit ms-auto" data-w="40">owner</span></div>
<div class="m-row d-flex align-items-center"><div class="face d-flex align-items-center justify-content-center">S</div><span class="fit" data-w="157">Shivansh Malhotra (You)</span><span class="fit ms-auto" data-w="52">can edit</span><svg width="10" height="7" style="margin:5px 0 0 5px"><use href="#cvb"/></svg></div>
<div class="m-row d-flex align-items-center"><div class="face d-flex align-items-center justify-content-center">S</div><span class="fit" data-w="101">Satyam Pandey</span><svg class="ms-auto" width="20" height="20" viewBox="0 0 20 20" style="margin-right:7px;margin-top:2px"><circle cx="10" cy="10" r="9.300" fill="none" stroke="#ef5a2f" stroke-width="1.400"/><path d="M10 5v6.500M10 13.500v2" stroke="#ef5a2f" stroke-width="2"/></svg><span class="fit" data-w="52">can edit</span><svg width="10" height="7" style="margin:5px 0 0 5px"><use href="#cvb"/></svg></div>
<div class="m-row d-flex align-items-center"><div class="face v d-flex align-items-center justify-content-center">A</div><span class="fit" data-w="177">Abhay Premkumar Nambiar</span></div>
<div class="m-foot d-flex align-items-center"><svg width="20" height="20" style="margin-top:2px"><use href="#link"/></svg><span class="fit" data-w="60" style="margin-left:6px">Copy link</span><svg width="18" height="12" viewBox="0 0 18 12" style="margin:0 5px 0 30px"><path d="M6.500.8L1.200 6l5.300 5.200M11.500.8L16.800 6l-5.300 5.200" fill="none" stroke="currentColor" stroke-width="1.400"/></svg><span class="fit" data-w="109">Get embed code</span></div>
</div>

<div class="tip"><span class="fit" data-w="184">This person has a <b>restricted</b></span><br><span class="fit" data-w="216">account. They will be able to <b>edit</b></span><br><span class="fit" data-w="170">files when their account is</span><br><span class="fit" data-w="66">upgraded.</span></div>
</section>
</main>
</div>
<script src="https://cdn.jsdelivr.net/npm/bootstrap@5.3.0/dist/js/bootstrap.bundle.min.js"></script>
<script>
// Track each label to its nominal width.
document.querySelectorAll('.fit').forEach(function (el) {
  var range = document.createRange();
  range.selectNodeContents(el);
  var w = range.getBoundingClientRect().width;
  var gap = (Number(el.dataset.w) - w) / el.textContent.length;
  el.style.letterSpacing = gap.toFixed(3) + 'px';
});
</script>
</body>
</html>
